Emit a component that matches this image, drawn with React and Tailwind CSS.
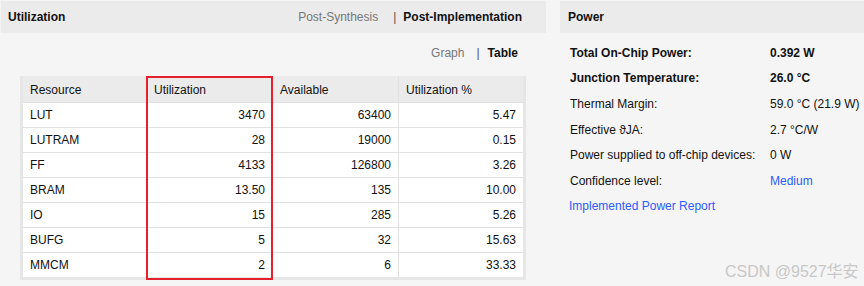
const rows = [
  ["LUT", "3470", "63400", "5.47"],
  ["LUTRAM", "28", "19000", "0.15"],
  ["FF", "4133", "126800", "3.26"],
  ["BRAM", "13.50", "135", "10.00"],
  ["IO", "15", "285", "5.26"],
  ["BUFG", "5", "32", "15.63"],
  ["MMCM", "2", "6", "33.33"],
];

const power = [
  { label: "Total On-Chip Power:", value: "0.392 W", bold: true },
  { label: "Junction Temperature:", value: "26.0 °C", bold: true },
  { label: "Thermal Margin:", value: "59.0 °C (21.9 W)" },
  { label: "Effective ϑJA:", value: "2.7 °C/W" },
  { label: "Power supplied to off-chip devices:", value: "0 W" },
  { label: "Confidence level:", value: "Medium", link: true },
];

function UtilTable() {
  return (
    <div className="relative ml-[19px] w-[506px] bg-[#e6e6e6] px-[3px] pb-[3px]">
      <div className="grid grid-cols-[123px_125px_125px_124px] gap-px bg-[#e2e2e2]">
        {["Resource", "Utilization", "Available", "Utilization %"].map((h) => (
          <div key={h} className="h-[26px] flex items-center px-[7px] pt-[2px] bg-[#ebebeb]">
            {h}
          </div>
        ))}
        {rows.map((r) =>
          r.map((c, i) => (
            <div
              key={r[0] + i}
              className={`h-[24px] flex items-center px-[7px] bg-white ${i ? "justify-end" : ""}`}
            >
              {c}
            </div>
          ))
        )}
      </div>
      {/* highlight box */}
      <div className="absolute left-[126px] top-0 w-[127px] h-[204px] border-2 border-[#e3202b]" />
    </div>
  );
}

export default function App() {
  return (
    <div className="relative h-[286px] w-[864px] overflow-hidden bg-[#f5f5f5] pt-px pl-px flex gap-[14px] text-[12px] text-[#111] font-['Liberation_Sans',Arial,sans-serif]">
      <div className="w-[545px]">
        <div className="h-8 bg-[#ebebeb] flex items-center justify-between pl-[7px] pr-6">
          <span className="font-bold">Utilization</span>
          <span className="flex items-center">
            <span className="text-[#777]">Post-Synthesis</span>
            <span className="ml-[15px] mr-[7px] text-[#555]">|</span>
            <span className="font-bold">Post-Implementation</span>
          </span>
        </div>
        <div className="h-[40px] flex items-center justify-end pr-7">
          <span className="text-[#777]">Graph</span>
          <span className="ml-[12px] mr-[8px] text-[#555]">|</span>
          <span className="font-bold">Table</span>
        </div>
        <div className="mt-[3px]">
          <UtilTable />
        </div>
      </div>

      <div className="flex-1">
        <div className="h-8 bg-[#ebebeb] flex items-center pl-2 font-bold">Power</div>
        <div className="pt-[7px] pl-[10px]">
          {power.map((p) => (
            <div key={p.label} className="h-[25.6px] flex items-center">
              <span className={`w-[200px] ${p.bold ? "font-bold" : ""}`}>{p.label}</span>
              <span className={`${p.bold ? "font-bold" : ""} ${p.link ? "text-[#2d5cff]" : ""}`}>
                {p.value}
              </span>
            </div>
          ))}
          <div className="h-[25.6px] flex items-center -ml-px text-[#2d5cff]">
            Implemented Power Report
          </div>
        </div>
      </div>

      <div className="absolute left-[725px] top-[262px] text-[16px] leading-[20px] text-[#c8c8c8] font-['Liberation_Sans','Noto_Sans_CJK_SC',sans-serif]">
        CSDN @9527华安
      </div>
    </div>
  );
}
